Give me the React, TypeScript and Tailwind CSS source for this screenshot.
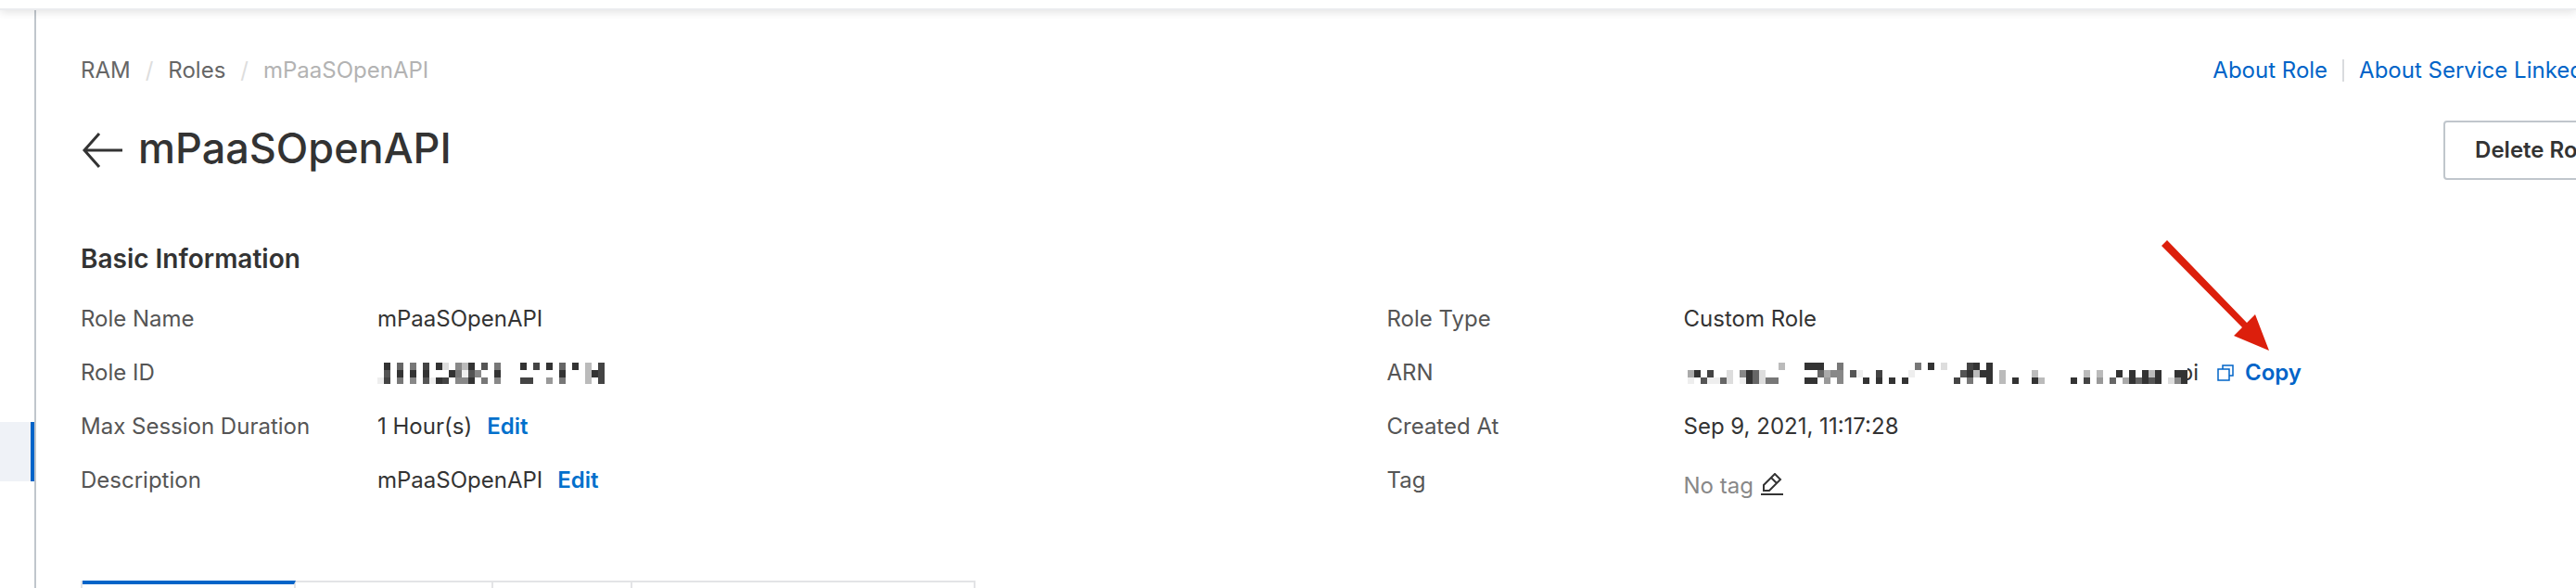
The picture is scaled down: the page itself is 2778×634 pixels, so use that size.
import React from "react";

// Each string is one row of blocks: "." is empty, a hex digit is its grey level.
const roleIdBlocks = [
  ".3.6.7.4.3d.8b3.5.7...3.4.3.6.3.b.4",
  ".5.3.3.3...37e58..3.........3...b34",
  "e4.7.8.5e34.883.7.8...44..9.7...b.4",
];

const arnBlocks = [
  "..............b...333..7...........7.3.d...43.3..............................",
  "a3.4..d.836d........6a88.5e..4....e.......53b33.b....b.......b.b..3.3.3b3..33",
  "e.5ee6d.e36d77....33.9.8...3.3.3.3.......4.7..3.b.3..3b....3.4.9.6.a36353.d83",
];

const tabs = [
  { name: "Permissions", width: "w-[230px]", active: true },
  { name: "Trust Policy", width: "w-[213px]", active: false },
  { name: "Tags", width: "w-[150px]", active: false },
  { name: "Access Advisor", width: "w-[370px]", active: false },
];

function Redacted({ rows, label }: { rows: string[]; label: string }) {
  const cols = rows[0].length;
  return (
    <span className="relative z-10 shrink-0 pt-2">
      <svg
        className="block bg-white"
        width={cols * 7}
        height="31"
        viewBox={`0 0 ${cols * 3} 12`}
        preserveAspectRatio="none"
        shapeRendering="crispEdges"
        role="img"
        aria-label={label}
      >
        {rows.map((row, y) =>
          row.split("").map((c, x) =>
            c === "." ? null : (
              <rect key={`${x}-${y}`} x={x * 3} y={y * 3} width="3" height="3" fill={`#${c}${c}${c}`} />
            )
          )
        )}
      </svg>
    </span>
  );
}

function Row({ label, children }: { label: string; children: React.ReactNode }) {
  return (
    <div className="flex h-[58px] items-center">
      <dt className="w-80 shrink-0 text-[#555]">{label}</dt>
      <dd className="flex items-center whitespace-nowrap text-[#333]">{children}</dd>
    </div>
  );
}

function EditButton() {
  return <button className="ml-4 font-semibold text-[#0070cc]">Edit</button>;
}

export default function App() {
  return (
    <div className="flex h-screen flex-col overflow-hidden bg-white font-['Inter',sans-serif] text-2xl leading-8 text-[#333]">
      <header className="relative h-[11px] shrink-0 border-b-2 border-[#ebecef] bg-white shadow-[0_2px_10px_rgba(0,0,0,0.12)]" />

      <div className="flex min-h-0 flex-1">
        <aside className="w-[39px] shrink-0 border-r-2 border-[#c0c6cc] pt-[444px]">
          <div className="h-16 border-r-4 border-[#0064c8] bg-[#eff2f7]" />
        </aside>

        <main className="min-w-0 flex-1 overflow-hidden pl-12">
          <div className="-mr-14 pt-[49px]">
            <div className="flex items-center justify-between">
              <nav aria-label="Breadcrumb" className="flex items-center gap-4 text-[#666]">
                <a href="#">RAM</a>
                <span className="text-[#ddd]">/</span>
                <a href="#">Roles</a>
                <span className="text-[#ddd]">/</span>
                <span className="text-[#b3b3b3]">mPaaSOpenAPI</span>
              </nav>
              <div className="-mr-2 flex items-center whitespace-nowrap text-[#0064c8]">
                <a href="#">About Role</a>
                <span className="mx-4 h-6 w-[2px] bg-[#d9dbde]" />
                <a href="#">About Service Linked Role</a>
              </div>
            </div>

            <div className="mt-[38px] flex items-center justify-between">
              <div className="flex items-center gap-4">
                <button aria-label="Back">
                  <svg width="46" height="40" viewBox="0 0 46 40" fill="none" stroke="#333" strokeWidth="3">
                    <path d="M45 20H4M20 2L4 20L20 38" />
                  </svg>
                </button>
                <h1 className="pb-1 text-[45px] leading-[56px] font-medium">mPaaSOpenAPI</h1>
              </div>
              <button className="h-16 rounded-[4px] border-2 border-[#c0c6cc] px-8 font-semibold whitespace-nowrap">
                Delete Role
              </button>
            </div>

            <section className="mt-[65px]">
              <h2 className="text-[28px] leading-10 font-semibold">Basic Information</h2>
              <div className="mt-4 grid grid-cols-2 gap-[70px]">
                <dl>
                  <Row label="Role Name">mPaaSOpenAPI</Row>
                  <Row label="Role ID">
                    <Redacted rows={roleIdBlocks} label="Hidden role ID" />
                  </Row>
                  <Row label="Max Session Duration">
                    1 Hour(s)
                    <EditButton />
                  </Row>
                  <Row label="Description">
                    mPaaSOpenAPI
                    <EditButton />
                  </Row>
                </dl>
                <dl>
                  <Row label="Role Type">Custom Role</Row>
                  <Row label="ARN">
                    <span className="relative flex items-center pl-1">
                      <Redacted rows={arnBlocks} label="Hidden ARN" />
                      <span className="-ml-2">pi</span>
                      {/* Points at the copy button */}
                      <svg
                        className="absolute -top-[124px] left-[515px] z-20"
                        width="120"
                        height="120"
                        viewBox="0 0 120 120"
                        fill="#dc1f0c"
                      >
                        <path d="M6 0L0 6L87 94L78 103L116 119L101 80L92 89Z" />
                      </svg>
                    </span>
                    <button className="ml-5 flex items-center gap-3 font-semibold text-[#0064c8]">
                      <svg width="18" height="18" viewBox="0 0 18 18" fill="none" stroke="currentColor" strokeWidth="1.5">
                        <path d="M1 5H13V17H1ZM6 5V1H17V12H13" />
                      </svg>
                      Copy
                    </button>
                  </Row>
                  <Row label="Created At">Sep 9, 2021, 11:17:28</Row>
                  <Row label="Tag">
                    <span className="pt-3 text-[#888]">No tag</span>
                    <button aria-label="Edit tags" className="ml-2 pt-2">
                      <svg width="24" height="24" viewBox="0 0 24 24" fill="none" stroke="#333" strokeWidth="2">
                        <path d="M3 19V13L15 1L21 7L9 19ZM11 5L17 11M0 23H24" />
                      </svg>
                    </button>
                  </Row>
                </dl>
              </div>
            </section>

            <div role="tablist" className="mt-[79px] flex border-l-2 border-[#e3e4e6]">
              {tabs.map((tab) => (
                <button
                  key={tab.name}
                  role="tab"
                  aria-label={tab.name}
                  aria-selected={tab.active}
                  className={`${tab.width} h-20 border-r-2 border-r-[#e3e4e6] ${
                    tab.active ? "border-t-4 border-t-[#0064c8]" : "border-t-2 border-t-[#e3e4e6]"
                  }`}
                />
              ))}
            </div>
          </div>
        </main>
      </div>
    </div>
  );
}
